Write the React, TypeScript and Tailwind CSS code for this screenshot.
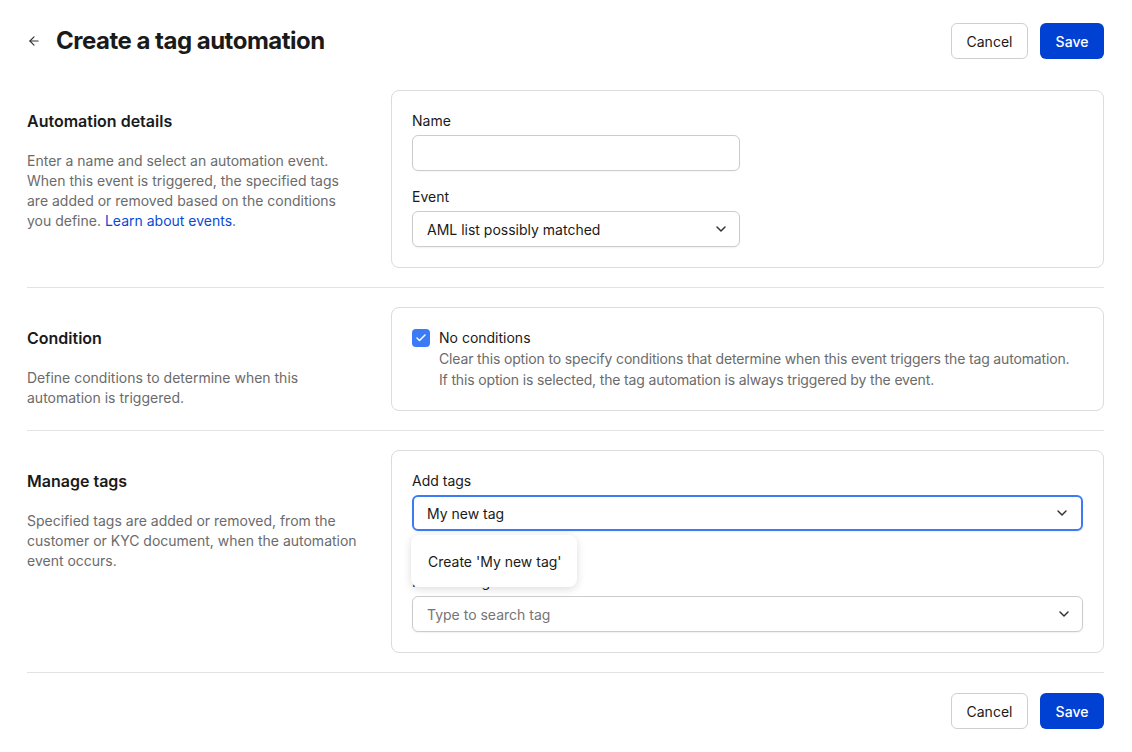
import React from "react";
import { ArrowLeft, ChevronDown, Check } from "lucide-react";

function Buttons() {
  return (
    <div className="flex items-center gap-3">
      <button className="h-9 w-[77px] rounded-md border border-[#cfcfcf] bg-white text-[14px] text-[#1a1a1a]">
        Cancel
      </button>
      <button className="h-9 w-[64px] rounded-md bg-[#0041d3] text-[14px] font-medium text-white">
        Save
      </button>
    </div>
  );
}

function Section({
  title,
  desc,
  children,
}: {
  title: string;
  desc: React.ReactNode;
  children: React.ReactNode;
}) {
  return (
    <div className="grid grid-cols-[364px_1fr] border-b border-[#e3e3e3] py-[19px]">
      <div className="pt-[19px]">
        <h2 className="text-[16px] font-semibold leading-6 text-[#1a1a1a]">{title}</h2>
        <p className="mt-[18px] w-[330px] text-[14px] leading-5 text-[#6b6b6b]">{desc}</p>
      </div>
      <div className="rounded-lg border border-[#dcdcdc] bg-white px-5 py-5">{children}</div>
    </div>
  );
}

function Select({
  value,
  placeholder,
  focused,
  className,
}: {
  value?: string;
  placeholder?: string;
  focused?: boolean;
  className?: string;
}) {
  return (
    <div
      className={
        "flex h-9 items-center justify-between rounded-md bg-white shadow-[0_1px_2px_rgba(0,0,0,0.06)] " +
        (focused ? "border-2 border-[#3b7cf6] pl-[13px] pr-[11px] " : "border border-[#cccccc] pl-[14px] pr-[10px] ") +
        (className ?? "")
      }
    >
      <span className={"text-[14px] " + (value ? "text-[#1a1a1a]" : "text-[#757575]")}>
        {value ?? placeholder}
      </span>
      <ChevronDown size={16} strokeWidth={2.2} className="text-[#333]" />
    </div>
  );
}

export default function App() {
  return (
    <div
      className="min-h-[752px] bg-white px-[27px] pr-[28px] text-[#1a1a1a]"
      style={{ fontFamily: "Inter, 'Noto Sans', sans-serif" }}
    >
      <header className="flex items-center justify-between pt-[23px] pb-[12px]">
        <div className="flex items-center gap-[15px]">
          <ArrowLeft size={14} strokeWidth={2} className="text-[#333]" />
          <h1 className="text-[24px] font-bold leading-9 tracking-[-0.5px] text-[#1a1a1a]">
            Create a tag automation
          </h1>
        </div>
        <Buttons />
      </header>

      <Section
        title="Automation details"
        desc={
          <>
            Enter a name and select an automation event. When this event is triggered, the specified
            tags are added or removed based on the conditions you define.{" "}
            <a className="text-[#0a49d6]">Learn about events</a>.
          </>
        }
      >
        <label className="block text-[14px] leading-5 text-[#1a1a1a]">Name</label>
        <div className="mt-1 h-9 w-[328px] rounded-md border border-[#cccccc] bg-white shadow-[0_1px_2px_rgba(0,0,0,0.04)]" />
        <label className="mt-4 block text-[14px] leading-5 text-[#1a1a1a]">Event</label>
        <Select value="AML list possibly matched" className="mt-1 w-[328px]" />
      </Section>

      <Section
        title="Condition"
        desc="Define conditions to determine when this automation is triggered."
      >
        <div className="flex gap-[9px]">
          <div className="mt-px flex h-[18px] w-[18px] shrink-0 items-center justify-center rounded-[4px] bg-[#3b7cf6]">
            <Check size={12} strokeWidth={3} className="text-white" />
          </div>
          <div>
            <div className="text-[14px] leading-5 text-[#1a1a1a]">No conditions</div>
            <p className="whitespace-nowrap text-[14px] leading-[21px] tracking-[-0.15px] text-[#6b6b6b]">
              Clear this option to specify conditions that determine when this event triggers the tag
              automation.
              <br />
              If this option is selected, the tag automation is always triggered by the event.
            </p>
          </div>
        </div>
      </Section>

      <Section
        title="Manage tags"
        desc="Specified tags are added or removed, from the customer or KYC document, when the automation event occurs."
      >
        <div className="relative">
          <label className="block text-[14px] leading-5 text-[#1a1a1a]">Add tags</label>
          <Select value="My new tag" focused className="mt-1" />
          <label className="mt-[41px] block text-[14px] leading-5 text-[#1a1a1a]">Remove tags</label>
          <Select placeholder="Type to search tag" className="mt-1" />
          <div className="absolute left-[-1px] top-[64px] flex h-[52px] w-[166px] items-center rounded-lg bg-white pl-[17px] shadow-[0_2px_8px_rgba(0,0,0,0.14)]">
            <span className="text-[14px] text-[#1a1a1a]">Create 'My new tag'</span>
          </div>
        </div>
      </Section>

      <div className="flex justify-end pt-5 pb-6">
        <Buttons />
      </div>
    </div>
  );
}
